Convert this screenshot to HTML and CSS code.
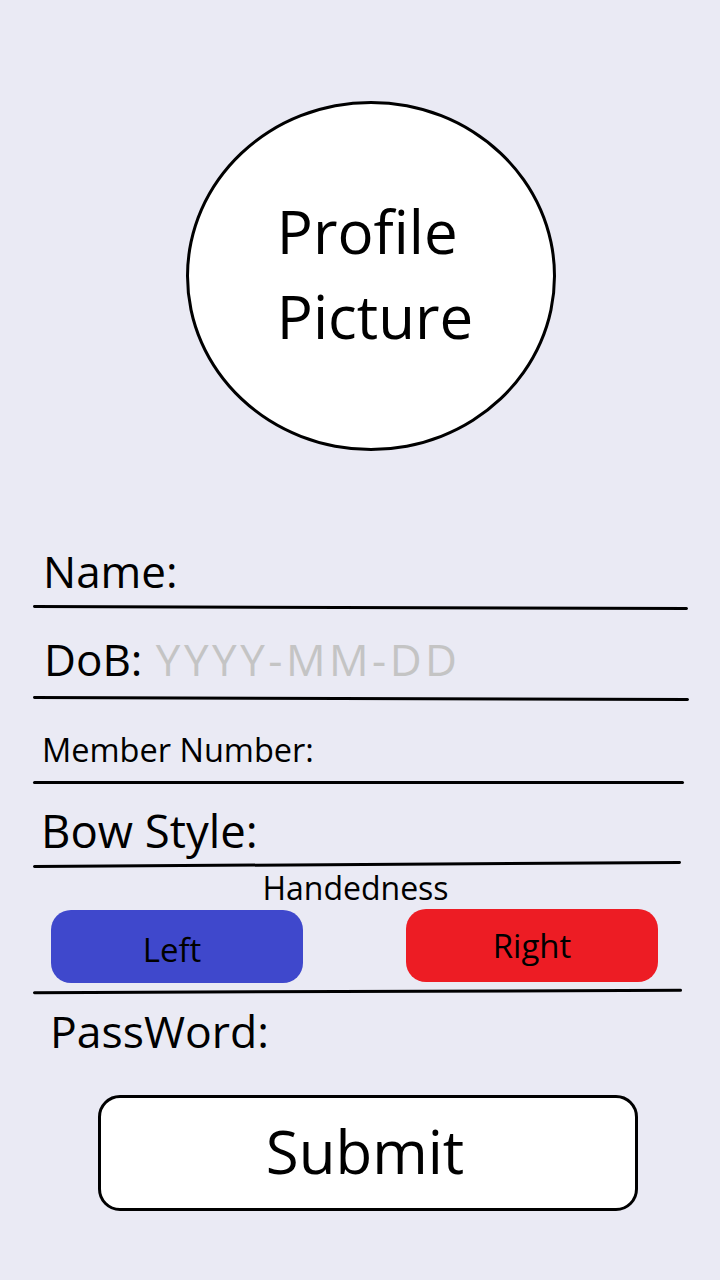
FILE: index.html
```html
<!DOCTYPE html>
<html lang="en">
<head>
<meta charset="utf-8">
<title>Profile</title>
<link rel="stylesheet" href="styles.css">
</head>
<body>
<main class="page">
  <div class="avatar">
    <div class="avatar-text">Profile<br>Picture</div>
  </div>

  <form class="form">
    <div class="field field-name"><span class="label">Name:</span></div>
    <div class="field field-dob"><span class="label">DoB:</span> <span class="placeholder">YYYY-MM-DD</span></div>
    <div class="field field-member"><span class="label small">Member Number:</span></div>
    <div class="field field-bow"><span class="label">Bow Style:</span></div>
    <div class="field field-hand">
      <div class="hand-title">Handedness</div>
      <div class="hand-buttons">
        <button type="button" class="hand-btn left">Left</button>
        <button type="button" class="hand-btn right">Right</button>
      </div>
    </div>
    <div class="field-pass"><span class="label">PassWord:</span></div>
    <button type="submit" class="submit">Submit</button>
  </form>
</main>
</body>
</html>
```

FILE: styles.css
```css
html, body {
  margin: 0;
  padding: 0;
}

body {
  background: #eaeaf4;
  font-family: "Open Sans", "Noto Sans", sans-serif;
  color: #000;
  width: 720px;
  height: 1280px;
  overflow: hidden;
}

.page {
  display: flex;
  flex-direction: column;
}

.avatar {
  margin-top: 101px;
  margin-left: 186px;
  width: 370px;
  height: 350px;
  box-sizing: border-box;
  border: 3px solid #000;
  border-radius: 50%;
  background: #fff;
  display: flex;
  align-items: center;
  justify-content: center;
}

.avatar-text {
  font-size: 60px;
  line-height: 85px;
  text-align: left;
  padding-bottom: 4px;
  padding-left: 8px;
}

.form {
  display: flex;
  flex-direction: column;
  margin: 0;
  padding-left: 33px;
}

.field {
  position: relative;
  box-sizing: border-box;
  padding-left: 10px;
  font-size: 44px;
  line-height: 53px;
}

.field::after {
  content: "";
  position: absolute;
  left: 0;
  right: 0;
  bottom: 0;
  height: 3px;
  background: #000;
  border-radius: 2px;
}

.label {
  font-size: 44px;
  line-height: 53px;
  display: inline-block;
}

.label.small {
  font-size: 32.5px;
  line-height: 37px;
}

.placeholder {
  font-size: 44px;
  line-height: 53px;
  color: #c4c4c4;
  letter-spacing: 3.5px;
}

.field-name {
  margin-top: 94px;
  width: 655px;
  padding-bottom: 11px;
}
.field-name::after { transform: rotate(0.17deg); }

.field-dob {
  margin-top: 24px;
  width: 656px;
  padding-bottom: 14px;
  padding-left: 11px;
}
.field-dob .placeholder { margin-left: 2px; }
.field-dob::after { transform: rotate(0.17deg); }

.field-member {
  margin-top: 31px;
  width: 651px;
  padding-bottom: 16px;
  padding-left: 9px;
  font-size: 32.5px;
  line-height: 37px;
}

.field-bow {
  margin-top: 20px;
  width: 648px;
  padding-bottom: 9px;
  padding-left: 8px;
  font-size: 45.5px;
}
.field-bow .label {
  font-size: 45.5px;
}
.field-bow::after { transform: rotate(-0.35deg); }

.field-hand {
  margin-top: 3px;
  width: 649px;
  padding-left: 0;
  padding-bottom: 10px;
  font-size: 32px;
  line-height: 37px;
}
.field-hand::after { transform: rotate(-0.2deg); }

.hand-title {
  text-align: center;
  font-size: 32px;
  line-height: 37px;
  padding-right: 4px;
}

.hand-buttons {
  display: flex;
  justify-content: space-between;
  margin-top: 3px;
  padding-left: 18px;
  padding-right: 24px;
}

.hand-btn {
  width: 252px;
  height: 73px;
  border: none;
  border-radius: 20px;
  font-family: inherit;
  font-size: 33px;
  color: #000;
  padding: 0;
}

.hand-btn.left {
  background: #3f48cc;
  margin-top: 1px;
  padding-top: 5px;
  padding-right: 10px;
}

.hand-btn.right {
  background: #ed1c24;
}

.field-pass {
  margin-top: 12px;
  padding-left: 17px;
}

.field-pass .label {
  font-size: 44.5px;
  line-height: 52px;
}

.submit {
  margin-top: 38px;
  margin-left: 65px;
  width: 540px;
  height: 116px;
  box-sizing: border-box;
  border: 3px solid #000;
  border-radius: 22px;
  background: #fff;
  font-family: inherit;
  font-size: 60px;
  color: #000;
  padding: 0 6px 4px 0;
}
```
